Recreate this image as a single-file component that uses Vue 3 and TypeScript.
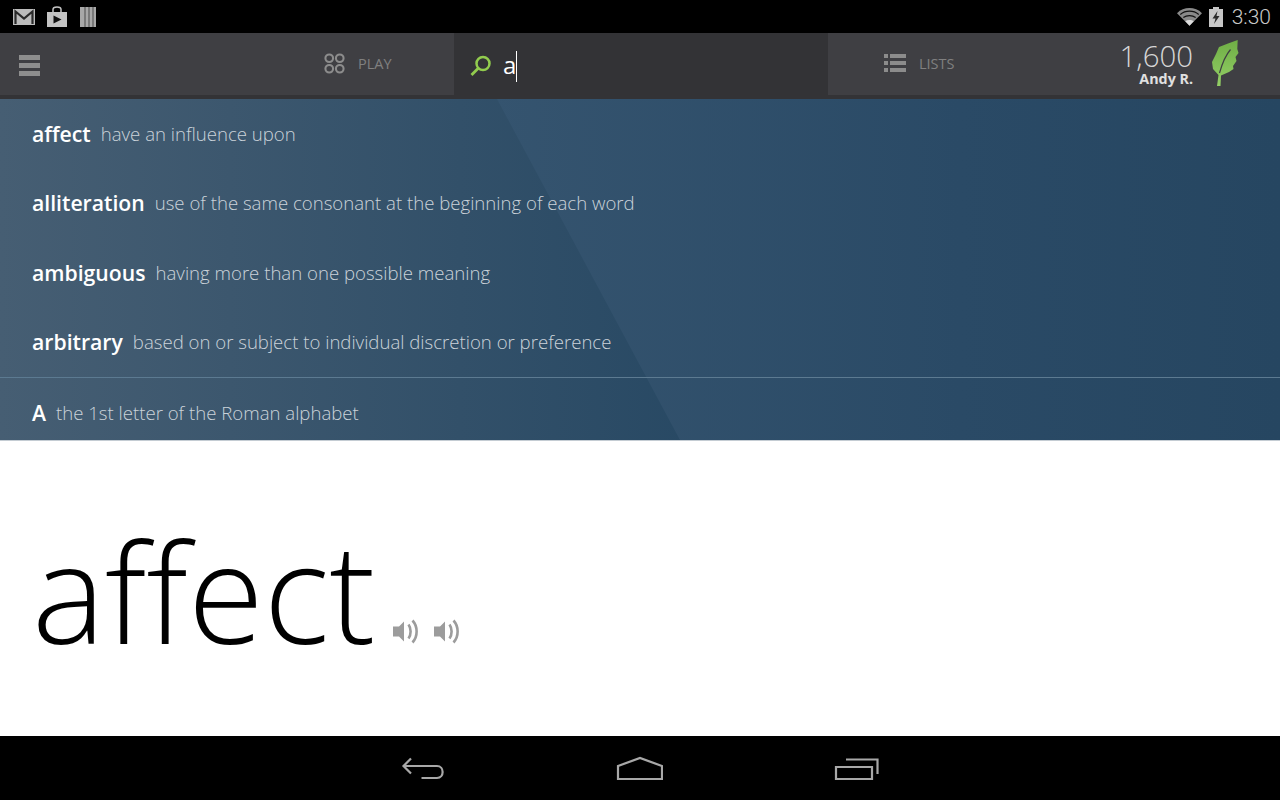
<script setup lang="ts">
interface Suggestion {
  word: string
  definition: string
}

const suggestions: Suggestion[] = [
  { word: 'affect', definition: 'have an influence upon' },
  { word: 'alliteration', definition: 'use of the same consonant at the beginning of each word' },
  { word: 'ambiguous', definition: 'having more than one possible meaning' },
  { word: 'arbitrary', definition: 'based on or subject to individual discretion or preference' }
]
</script>

<template>
  <div class="screen">
    <!-- Android status bar -->
    <header class="status-bar">
      <div class="status-icons">
        <svg width="24" height="18" viewBox="0 0 24 18">
          <rect x="1" y="1" width="22" height="16" fill="#bcbcbc" />
          <path d="M3.500 16V3.500L12 10.500l8.500-7V16" fill="none" stroke="#2a2a2a" stroke-width="2.200" />
        </svg>
        <svg width="22" height="22" viewBox="0 0 22 22">
          <path d="M1 6h20v15H1z" fill="#c4c4c4" />
          <path d="M7 6V3.500C7 2 8.500 1 11 1s4 1 4 2.500V6" fill="none" stroke="#c4c4c4" stroke-width="1.500" />
          <path d="M7.500 9.500l8 4-8 4z" fill="#111" />
        </svg>
        <svg class="bars" width="16" height="20" viewBox="0 0 16 20">
          <path d="M0 0h16v20H0z" fill="#a8a8a8" />
          <path d="M5 0v20M9 0v20M13 0v20" stroke="#4a4a4a" stroke-width="1" />
        </svg>
      </div>
      <div class="status-right">
        <svg class="wifi" width="25" height="18" viewBox="0 0 26 18">
          <path d="M13 18L0 5c7-7 19-7 26 0z" fill="#8a8a8a" />
          <path d="M3.400 6.400c5.400-4.600 13.800-4.600 19.200 0M6.600 9.600c3.600-2.800 9.200-2.800 12.800 0" fill="none" stroke="#111" stroke-width="1.200" />
          <path d="M13 18l-4.400-4.600c2.400-1.600 6.400-1.600 8.800 0z" fill="#ddd" />
        </svg>
        <svg width="14" height="20" viewBox="0 0 14 20">
          <path d="M4 0h6v2h4v18H0V2h4z" fill="#c6c6c6" />
          <path d="M8.500 4L3.500 11.500h3L5 17l5.500-8h-3z" fill="#2a2a2a" />
        </svg>
        <span class="clock">3:30</span>
      </div>
    </header>

    <!-- App toolbar -->
    <nav class="toolbar">
      <div class="menu-cell">
        <span class="burger"><i></i><i></i><i></i></span>
      </div>
      <div class="tab tab-play">
        <svg width="21" height="21" viewBox="0 0 22 22" fill="none" stroke="#8c8c8c" stroke-width="2.200">
          <circle cx="5.500" cy="5.500" r="4" />
          <circle cx="16.500" cy="5.500" r="4" />
          <circle cx="5.500" cy="16.500" r="4" />
          <circle cx="16.500" cy="16.500" r="4" />
        </svg>
        <span>PLAY</span>
      </div>
      <div class="search">
        <svg width="22" height="22" viewBox="0 0 22 22" fill="none" stroke="#92cc4e">
          <circle cx="13" cy="8.500" r="6.500" stroke-width="2.500" />
          <path d="M8.500 13L1.500 20" stroke-width="2.800" />
        </svg>
        <span class="query">a</span><span class="caret"></span>
      </div>
      <div class="tab tab-lists">
        <svg width="22" height="20" viewBox="0 0 22 20" fill="#8c8c8c">
          <path d="M0 1h4v4H0zM6 1h16v4H6zM0 8h4v4H0zM6 8h16v4H6zM0 15h4v4H0zM6 15h16v4H6z" />
        </svg>
        <span>LISTS</span>
      </div>
      <div class="profile">
        <div class="score">
          <span class="points">1,600</span>
          <span class="user">Andy R.</span>
        </div>
        <svg class="leaf" width="28" height="47" viewBox="0 0 28 47">
          <defs>
            <linearGradient id="leafFill" x1="0" y1="0" x2="0" y2="1">
              <stop offset="0" stop-color="#6fae45" />
              <stop offset="1" stop-color="#93cf66" />
            </linearGradient>
          </defs>
          <path d="M26.700 0L26.300 9l1.200 4-3 4 1 4-3.500 5 .5 3-4.500 3-8 3.500-.5 10.500H6l1.500-11L2 29l-1-7 4-8 3-7 9-3.500z" fill="url(#leafFill)" />
          <path d="M8.500 33C11 24 14 16 19.500 9.500" fill="none" stroke="#3f3f43" stroke-width="1.200" />
        </svg>
      </div>
    </nav>

    <!-- Suggestions dropdown -->
    <section class="dropdown">
      <div class="facet"></div>
      <ul class="results">
        <li v-for="item in suggestions" :key="item.word" class="row">
          <strong>{{ item.word }}</strong>
          <span>{{ item.definition }}</span>
        </li>
      </ul>
      <div class="row exact">
        <strong>A</strong>
        <span>the 1st letter of the Roman alphabet</span>
      </div>
    </section>

    <!-- Word page -->
    <main class="word-page">
      <h1>affect</h1>
      <div class="speakers">
        <svg v-for="n in 2" :key="n" width="26" height="25" viewBox="0 0 26 25" fill="none" stroke="#9c9c9c" stroke-width="2.600">
          <path d="M0 7.500h6l5-5v20l-5-5H0z" fill="#9c9c9c" stroke="none" />
          <path d="M15.500 5.500c2.800 4 2.800 10 0 14" />
          <path d="M19.500 1.500c5.500 6 5.500 16 0 22" />
        </svg>
      </div>
    </main>

    <!-- Android nav bar -->
    <footer class="nav-bar">
      <svg width="44" height="24" viewBox="0 0 44 24" fill="none" stroke="#a8a8a8" stroke-width="2.200">
        <path d="M10 2.500L2.500 10l7.500 7.500" />
        <path d="M2.500 10H36c7.500 0 7.500 12 0 12H20.500" />
      </svg>
      <svg width="48" height="24" viewBox="0 0 48 24" fill="none" stroke="#a8a8a8" stroke-width="2.200">
        <path d="M3 10L25 2l22 8v13H3z" />
      </svg>
      <svg width="46" height="24" viewBox="0 0 46 24" fill="none" stroke="#a8a8a8" stroke-width="2.200">
        <path d="M3 11h36v12H3z" />
        <path d="M13 3.500h31.500V18" />
      </svg>
    </footer>
  </div>
</template>

<style scoped>
.screen {
  width: 1280px;
  height: 800px;
  display: flex;
  flex-direction: column;
  overflow: hidden;
  font-family: "Open Sans", "Liberation Sans", sans-serif;
  background: #fff;
}

.status-bar {
  height: 33px;
  flex: none;
  background: #000;
  display: flex;
  align-items: center;
  justify-content: space-between;
  padding: 0 9px 0 12px;
}

.status-icons {
  display: flex;
  align-items: center;
  gap: 10px;
}

.bars {
  margin-left: 2px;
}

.status-right {
  display: flex;
  align-items: center;
  gap: 5px;
}

.wifi {
  margin-right: 2px;
}

.clock {
  color: #c8c8c8;
  font-family: Roboto, sans-serif;
  font-size: 21px;
  font-weight: 300;
  margin-left: 4px;
}

.toolbar {
  height: 66px;
  flex: none;
  display: flex;
  background: #3f3f43;
  border-bottom: 4px solid #333336;
  box-sizing: border-box;
}

.menu-cell {
  width: 300px;
  display: flex;
  align-items: center;
  padding: 3px 0 0 19px;
  box-sizing: border-box;
}

.burger {
  display: flex;
  flex-direction: column;
  gap: 3px;
}

.burger i {
  display: block;
  width: 21px;
  height: 5px;
  background: #8e8e8e;
}

.tab {
  display: flex;
  align-items: center;
  gap: 13px;
  color: #808080;
  font-size: 14.500px;
  padding-bottom: 2px;
}

.tab-play {
  width: 154px;
  padding-left: 24px;
  box-sizing: border-box;
}

.tab-lists {
  width: 270px;
  padding-left: 56px;
  box-sizing: border-box;
}

.search {
  width: 374px;
  display: flex;
  align-items: center;
  padding: 4px 0 0 16px;
  box-sizing: border-box;
  background: #333336;
}

.query {
  color: #fff;
  font-size: 24px;
  margin-left: 11px;
  margin-bottom: 4px;
}

.caret {
  width: 1px;
  height: 31px;
  background: #fff;
}

.profile {
  flex: 1;
  display: flex;
  align-items: center;
  gap: 18px;
}

.score {
  display: flex;
  flex-direction: column;
  align-items: flex-end;
  color: #e0e0e0;
  width: 95px;
  padding-bottom: 1px;
}

.points {
  font-size: 29.400px;
  font-weight: 300;
  line-height: 30px;
  color: #d6d6d6;
}

.user {
  font-size: 14.300px;
  font-weight: 700;
  line-height: 15px;
}

.leaf {
  margin-top: -1px;
}

.dropdown {
  position: relative;
  height: 342px;
  flex: none;
  background: linear-gradient(90deg, #465e73 0%, #284964 54%, #284964 100%);
  border-bottom: 1px solid #c4ccd3;
  box-sizing: border-box;
  display: flex;
  flex-direction: column;
}

.facet {
  position: absolute;
  inset: 0;
  clip-path: polygon(497px 0, 100% 0, 100% 100%, 680px 100%);
  background: linear-gradient(90deg, #35546f 38%, #2a4a66 75%, #264661 100%);
}

.results {
  position: relative;
  list-style: none;
  margin: 0;
  padding: 0;
  flex: 1;
  display: flex;
  flex-direction: column;
  border-bottom: 1px solid #5c7a91;
}

.row {
  position: relative;
  height: 69.500px;
  display: flex;
  align-items: center;
  gap: 10px;
  padding: 0 0 1px 32px;
  box-sizing: border-box;
  color: #fff;
}

.row strong {
  font-size: 21.200px;
  font-weight: 600;
}

.row span {
  font-size: 18.600px;
  font-weight: 300;
  color: #cbd3da;
}

.exact {
  height: 62px;
  flex: none;
  padding-top: 7px;
}

.word-page {
  flex: 1;
  display: flex;
  align-items: flex-end;
  padding: 0 0 77px 32px;
  gap: 17px;
}

h1 {
  margin: 0;
  font-size: 138px;
  font-weight: 300;
  line-height: 138px;
  color: #000;
}

.speakers {
  display: flex;
  gap: 15px;
  margin-bottom: 15px;
}

.nav-bar {
  height: 64px;
  flex: none;
  background: #000;
  display: flex;
  align-items: center;
  justify-content: center;
  gap: 170px;
}
</style>

<style>
html, body {
  margin: 0;
  background: #fff;
}
</style>
